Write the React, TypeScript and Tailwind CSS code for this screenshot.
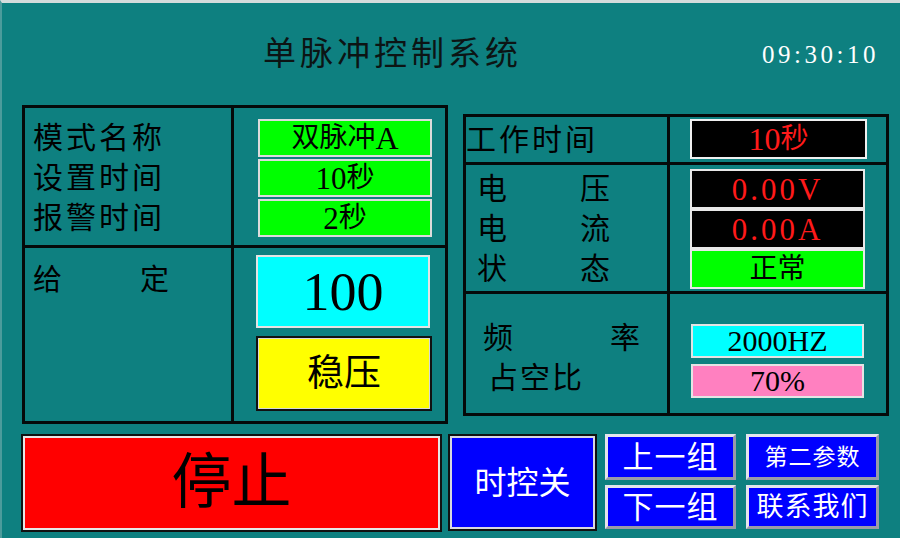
import React from "react";

const F = "font-['Liberation_Serif','Noto_Sans_CJK_SC',serif]";

function L({ children, s = "text-[31px]" }: { children: React.ReactNode; s?: string }) {
  return <span className={`${s} font-['Liberation_Serif',serif] leading-none`}>{children}</span>;
}

function GreenBox({ children }: { children: React.ReactNode }) {
  return (
    <div className="w-[174px] h-[38px] bg-[#00ff00] border-2 border-[#dcdcdc] flex items-center justify-center text-[28px] leading-none text-black">
      {children}
    </div>
  );
}

function SmallBtn({ children, w, h, size }: { children: React.ReactNode; w: string; h: string; size: string }) {
  return (
    <div
      className={`${w} ${h} ${size} bg-[#0000ff] border-[3px] border-t-[#e4e4ec] border-l-[#e4e4ec] border-r-[#9a9aa8] border-b-[#9a9aa8] flex items-center justify-center text-white leading-none tracking-[1px]`}
    >
      {children}
    </div>
  );
}

export default function App() {
  return (
    <div
      className={`w-[900px] h-[538px] overflow-hidden bg-[#0e8080] border-t-[3px] border-t-[#d4dcdc] border-l-2 border-l-[#4c9c9c] flex flex-col ${F} text-black`}
    >
      {/* Header */}
      <div className="h-[102px] flex items-center pl-[261px] pr-[21px]">
        <div className="text-[33px] tracking-[4px] leading-none text-[#0c1414]">单脉冲控制系统</div>
        <div className="ml-auto text-[25px] tracking-[3.5px] leading-none text-white">09:30:10</div>
      </div>

      {/* Main tables */}
      <div className="flex items-start pl-[20px] gap-[15px]">
        {/* Left table */}
        <div className="w-[426px] grid grid-cols-[206px_211px] grid-rows-[137px_173px] gap-[3px] p-[3px] bg-[#050a0a]">
          <div className="bg-[#0e8080] pt-[11px] pl-[8px] flex flex-col gap-[2px]">
            {["模式名称", "设置时间", "报警时间"].map((t) => (
              <div key={t} className="h-[38px] flex items-center text-[30px] tracking-[3px] leading-none">
                {t}
              </div>
            ))}
          </div>
          <div className="bg-[#0e8080] pt-[11px] pl-[24px] flex flex-col gap-[2px]">
            <GreenBox>
              双脉冲<L s="text-[32px]">A</L>
            </GreenBox>
            <GreenBox>
              <L>10</L>秒
            </GreenBox>
            <GreenBox>
              <L>2</L>秒
            </GreenBox>
          </div>
          <div className="bg-[#0e8080] pt-[18px] pl-[8px]">
            <div className="w-[136px] flex justify-between text-[29px] leading-none">
              <span>给</span>
              <span>定</span>
            </div>
          </div>
          <div className="bg-[#0e8080] pt-[7px] pl-[22px] flex flex-col gap-[8px]">
            <div className="w-[174px] h-[73px] bg-[#00ffff] border-2 border-[#e4e4e4] flex items-center justify-center text-[54px] leading-none">
              100
            </div>
            <div className="w-[176px] h-[75px] bg-[#ffff00] border-2 border-[#111] shadow-[inset_0_0_0_1px_#d8d8d8] flex items-center justify-center text-[37px] leading-none">
              稳压
            </div>
          </div>
        </div>

        {/* Right table */}
        <div className="mt-[9px] w-[426px] grid grid-cols-[201px_216px] grid-rows-[45px_126px_119px] gap-[3px] p-[3px] bg-[#050a0a]">
          <div className="bg-[#0e8080] flex items-center text-[30px] tracking-[3px] leading-none">工作时间</div>
          <div className="bg-[#0e8080] pt-[2px] pl-[20px]">
            <div className="w-[177px] h-[40px] bg-black border-2 border-[#f0f0f0] flex items-center justify-center text-[28px] leading-none text-[#ff1a1a]">
              <L s="text-[32px]">10</L>秒
            </div>
          </div>

          <div className="bg-[#0e8080] pt-[4px] pl-[11px] flex flex-col">
            {[
              ["电", "压"],
              ["电", "流"],
              ["状", "态"],
            ].map(([a, b], i) => (
              <div key={i} className="h-[40px] w-[133px] flex items-center justify-between text-[30px] leading-none">
                <span>{a}</span>
                <span>{b}</span>
              </div>
            ))}
          </div>
          <div className="bg-[#0e8080] pt-[4px] pl-[20px] flex flex-col">
            <div className="w-[175px] h-[40px] bg-black border-2 border-[#e8e8e8] flex items-center justify-center text-[31px] tracking-[3px] leading-none text-[#ff1a1a]">
              0.00V
            </div>
            <div className="w-[175px] h-[40px] bg-black border-2 border-[#e8e8e8] flex items-center justify-center text-[31px] tracking-[3px] leading-none text-[#ff1a1a]">
              0.00A
            </div>
            <div className="w-[175px] h-[40px] bg-[#00ff00] border-2 border-[#e8e8e8] flex items-center justify-center text-[28px] leading-none">
              正常
            </div>
          </div>

          <div className="bg-[#0e8080] pt-[27px] flex flex-col gap-[6px]">
            <div className="h-[34px] pl-[17px] flex items-center">
              <div className="w-[157px] flex justify-between text-[30px] leading-none">
                <span>频</span>
                <span>率</span>
              </div>
            </div>
            <div className="h-[34px] pl-[22px] flex items-center text-[30px] tracking-[2px] leading-none">占空比</div>
          </div>
          <div className="bg-[#0e8080] pt-[30px] pl-[21px] flex flex-col gap-[6px]">
            <div className="w-[173px] h-[34px] bg-[#00ffff] border-2 border-[#e4e4e4] flex items-center justify-center text-[30px] leading-none">
              2000HZ
            </div>
            <div className="w-[173px] h-[34px] bg-[#ff80c0] border-2 border-[#e4e4e4] flex items-center justify-center text-[30px] leading-none">
              70%
            </div>
          </div>
        </div>
      </div>

      {/* Bottom buttons */}
      <div className="mt-[10px] flex items-start pl-[19px]">
        <div className="w-[421px] h-[98px] bg-[#ff0000] border-2 border-[#111] shadow-[inset_0_0_0_2px_#e6e6e6] flex items-center justify-center text-[60px] leading-none text-black">
          停止
        </div>
        <div className="ml-[6px] w-[149px] h-[97px] bg-[#0000ff] border-2 border-[#111] shadow-[inset_0_0_0_2px_#d8d8e0] flex items-center justify-center text-[32px] leading-none text-white">
          时控关
        </div>
        <div className="ml-[8px] flex flex-col gap-[5px]">
          <SmallBtn w="w-[131px]" h="h-[46px]" size="text-[31px]">上一组</SmallBtn>
          <SmallBtn w="w-[131px]" h="h-[44px]" size="text-[31px]">下一组</SmallBtn>
        </div>
        <div className="ml-[10px] flex flex-col gap-[5px]">
          <SmallBtn w="w-[133px]" h="h-[46px]" size="text-[23px]">第二参数</SmallBtn>
          <SmallBtn w="w-[133px]" h="h-[44px]" size="text-[27px]">联系我们</SmallBtn>
        </div>
      </div>
    </div>
  );
}
